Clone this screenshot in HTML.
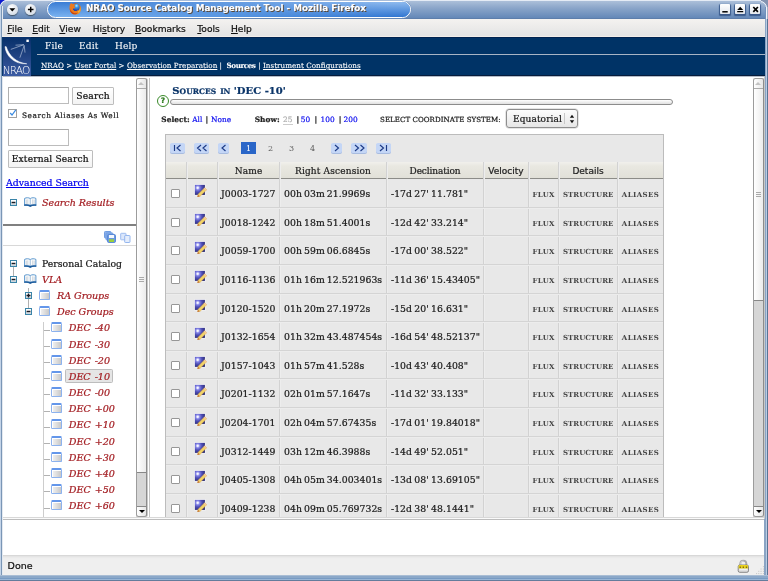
<!DOCTYPE html>
<html lang="en"><head><meta charset="utf-8"><title>NRAO Source Catalog Management Tool - Mozilla Firefox</title>
<style>
*{box-sizing:border-box;margin:0;padding:0}
html,body{width:768px;height:581px;overflow:hidden;background:#fff}
body{position:relative;-webkit-text-stroke:.22px;font-family:"DejaVu Serif","Liberation Serif",serif;font-size:9px;color:#1a1a1a;letter-spacing:.16px}
i{font-style:normal;display:block;position:absolute}
a{color:inherit}
.abs,#win div,#win span.c{position:absolute}
#win{position:absolute;left:0;top:0;width:768px;height:581px;overflow:hidden;background:#fff;will-change:transform}
/* window frame */
#titlebar{left:0;top:0;width:768px;height:19px;background:linear-gradient(#e4ebf5 0,#e4ebf5 1px,#a9bdd8 1.500px,#8aa5c9 45%,#6488b8 100%);border-bottom:1px solid #5d7eab}
#corner{left:0;top:0;width:6px;height:6px;overflow:hidden}
#corner:after{content:"";position:absolute;left:0;top:.3px;width:12px;height:12px;border:1px solid #eef2f9;border-radius:50%;box-shadow:0 0 0 8px #0a18d0}
#pill{left:47px;top:1px;width:364px;height:17px;border:1px solid #fff;border-radius:9px;background:linear-gradient(#3b7dd4,#7ab2f0);box-shadow:0 0 0 .5px #6d8fc0;overflow:hidden}
#pill:after{content:"";position:absolute;left:0;top:0;right:0;bottom:0;background:linear-gradient(#8ebaee,#3176d1);-webkit-mask-image:linear-gradient(90deg,transparent 5%,#000 95%);mask-image:linear-gradient(90deg,transparent 5%,#000 95%)}
#ttl{left:86px;top:3.200px;height:14px;line-height:14px;font:bold 8.800px "DejaVu Sans","Liberation Sans",sans-serif;color:#fff;text-shadow:1px 1px 0 #5a4632;-webkit-text-stroke:.1px;white-space:nowrap;letter-spacing:0}
.wb{border-radius:50%;width:10.600px;height:10.600px;background:radial-gradient(circle at 40% 35%,#fff,#d8dfe8 70%,#9aa);box-shadow:0 1px 1px #456}
.wq{width:10px;height:10px;background:linear-gradient(#fff,#e4e8ee);border-radius:1px;box-shadow:0 1px 1px 0.5px #3a5a8c}
#lb{left:0;top:6px;width:3px;height:575px;background:linear-gradient(90deg,#c4d4e8 0,#c4d4e8 1px,#7a96b6 1px,#7a96b6 2px,#e4e9f0 2px)}
#rb{left:764px;top:77px;width:4px;height:504px;background:linear-gradient(90deg,#c8c8c8 0,#c8c8c8 1px,#8aa4c4 1px,#8aa4c4 2px,#b8cce4 2px,#b8cce4 3px,#5a7494 3px)}
#rb3{left:765px;top:19px;width:3px;height:58px;background:linear-gradient(90deg,#8aa4c4 0,#8aa4c4 1px,#b8cce4 1px,#b8cce4 2px,#5a7494 2px)}
#rb2{left:764.500px;top:6.500px;width:3.500px;height:12.500px;background:linear-gradient(90deg,#7090bc 0,#7090bc 1.200px,#f0f4fa 1.400px,#f0f4fa 2.400px,#5a6f94 2.600px)}
#trc{left:761px;top:0;width:7px;height:7px;overflow:hidden}
#trc:after{content:"";position:absolute;right:1px;top:.5px;width:12px;height:12px;border:1px solid #f4f7fb;border-radius:50%;box-shadow:0 0 0 8px #8393b0}
#bb{left:0;top:575px;width:768px;height:6px;background:linear-gradient(#a9bdd4 0,#a9bdd4 1px,#8ba8c9 1px,#8ba8c9 3px,#789bc3 3px,#789bc3 4px,#9ab6d6 4px,#9ab6d6 5px,#647c9c 5px)}
#menubar{left:2px;top:19px;width:763px;height:18px;background:linear-gradient(#f4f2f0,#e5e5e5 90%);border-bottom:1px solid #f3eee9;font:9.1px "DejaVu Sans","Liberation Sans",sans-serif;color:#111;letter-spacing:0}
#menubar span{position:absolute;top:4px;line-height:12px;white-space:nowrap}
#menubar u{text-decoration:underline;text-underline-offset:1px}
/* navy header */
#hdr{left:2px;top:37px;width:763px;height:39px;background:linear-gradient(#001d48 0,#002a5a 1px,#003366 1.500px);border-bottom:1px solid #061c3c;box-shadow:0 1px 0 #b4bcc8}
#hdr .m{position:absolute;top:3px;color:#fff;font-size:9px;line-height:12px;-webkit-text-stroke:.08px}
#hline{left:35.300px;top:17px;width:727.700px;height:1px;background:#a8b4c4}
#crumb{left:39px;top:23px;height:12px;line-height:12px;font-size:7.2px;color:#fff;white-space:nowrap;letter-spacing:.02px;-webkit-text-stroke:.1px}
#crumb u{text-decoration:underline}
#crumb b{font-weight:bold;letter-spacing:-.45px;margin-left:2.200px;margin-right:.5px}
/* left panel */
#left{left:2px;top:78px;width:134px;height:439px;overflow:hidden;background:#fff}
.inp{position:absolute;width:61px;height:17px;background:#fff;border:1px solid #bcbcbc;border-top-color:#a8a8a8;border-left-color:#b0b0b0}
.btn{position:absolute;background:linear-gradient(#fff,#f3f3f3);border:1px solid #bdbdbd;border-radius:1px;font-size:9.2px;text-align:center;white-space:nowrap;color:#111}
#chk{left:6px;top:31px;width:9px;height:9px;border:1px solid #a0a0a0;background:#fff}
#chklbl{left:20px;top:33px;font-size:7.4px;line-height:10px;letter-spacing:.55px;white-space:nowrap;color:#222}
#adv{left:4px;top:97.500px;font-size:9.4px;line-height:13px;color:#0000ee;text-decoration:underline;white-space:nowrap;letter-spacing:0}
.pm{position:absolute;width:7px;height:7px}
.lbl{position:absolute;white-space:nowrap;font-size:9.3px;line-height:12px;letter-spacing:0;margin-top:1px}
.lbl.it,.tn .lbl{font-size:9.6px;letter-spacing:-.05px}
.it{font-style:italic;color:#a31d22}
#hr1{left:0;top:146.300px;width:134px;height:1.700px;background:#808080}
#hr2{left:0;top:167px;width:134px;height:1px;background:#d8d8d8}
.vl{width:1px;background:#b0b0b0}
.fold{width:11px;height:10px;border:1px solid #8cb2ee;border-top:2px solid #6396ea;border-radius:1px;background:linear-gradient(90deg,#f4f4f4,#c8c8c8);box-shadow:inset 1px 1px 0 #fff;border-radius:1.500px}
.tn{position:absolute;left:0;width:134px;height:16px}
.tn .tl{left:42px;top:10.400px;width:5.500px;height:1px;background:#b2b2b2}
.tn .fold{left:48.700px;top:3px}
.tn .lbl{left:66.800px;top:2px;font-style:italic;color:#a31d22;word-spacing:1px}
.tn .lbl.sel{left:63px;top:0;padding:2px 1.750px 0 2.750px;line-height:10px;border:1px solid #bdbdbd;background:#e5e5e5;border-radius:1.500px}
/* scrollbars */
.sb{position:absolute;width:11px;background:#d6d6d6;border:1px solid #9c9c9c;border-right-color:#8c8c8c;border-radius:2.500px;overflow:hidden;box-shadow:1px 0 0 #c8c8c8}
.sb .up,.sb .dn{position:absolute;left:0;width:9px;height:10px;background:linear-gradient(90deg,#fff,#e6e6e6);border-bottom:1px solid #aaa}
.sb .dn{border-bottom:0;border-top:1px solid #888;border-radius:0 0 2px 2px}
.sb .tb{position:absolute;left:0;width:9px;background:linear-gradient(90deg,#fff,#ececec);border-bottom:1px solid #888}
.sb .gr{position:absolute;left:2px;width:5px;height:5px;border-top:1px solid #aaa;border-bottom:1px solid #aaa}
.sb .gr:after{content:"";position:absolute;left:0;top:1px;width:5px;height:1px;background:#aaa}
.arr{position:absolute;left:2px;width:0;height:0;border:2.5px solid transparent}
/* main */
#h1{left:172.300px;top:84.500px;width:130px;height:14px;font-weight:bold;font-size:10px;line-height:12px;color:#0a3468;white-space:nowrap;letter-spacing:.03px}
#h1 span,#h1 small{position:absolute;left:0;top:0}
#h1 small{font-size:7.500px;top:1.2px;left:7.300px;letter-spacing:.02px}
#help{left:157px;top:95px;width:12px;height:12px;border:1.800px solid #3a8a2a;border-radius:50%;background:#fff;color:#2a7a1a;font:bold 7.500px/9px "DejaVu Sans","Liberation Sans",sans-serif;text-align:center;letter-spacing:0}
#bar{left:170px;top:99px;width:503px;height:6px;border:1px solid #8c8c8c;border-radius:3px;background:linear-gradient(#fff,#e0e0e0)}
.sm{position:absolute;top:114px;font-size:7.4px;line-height:11px;white-space:nowrap;letter-spacing:.05px;color:#222}
.sm b{font-weight:bold}
.sm a{color:#1414f0;text-decoration:none}
.sm em{font-style:normal;color:#b0b0b0;border-bottom:1px solid #ccc}
#csl{left:380px;top:114px;font-size:7.050px;line-height:11px;letter-spacing:.05px;white-space:nowrap;color:#222}
#sel{left:506px;top:109px;width:72px;height:19px;border:1px solid #8e8e8e;border-radius:3px;background:linear-gradient(#fcfcfc,#e6e6e6);box-shadow:0 0 0 .5px #ccc}
#sel span{position:absolute;left:6px;top:3px;font-size:9px;line-height:13px;letter-spacing:.1px}
#sel i.sp{left:57px;top:3px;width:1px;height:11px;background:#c8c8c8}
#tbl{left:165px;top:134px;width:499px;height:383px;background:#e8e8e8;border:1px solid #bcbcbc;border-bottom:0}
#thead{left:166px;top:162px;width:497px;height:17px;background:linear-gradient(#f1f0ec 0,#e9e8e1 25%,#e1e0d8 100%);border-bottom:1.500px solid #8c8c88}
.th{position:absolute;top:164.500px;height:12px;line-height:12px;text-align:center;font-size:9px;white-space:nowrap;color:#222}
.th.ss{font-family:"DejaVu Sans","Liberation Sans",sans-serif;letter-spacing:0}
.cv{position:absolute;top:162px;width:2px;height:355px;background:linear-gradient(90deg,#d2d2d2 50%,#ededed 50%)}
.pg{position:absolute;top:143px;height:10px;background:#c4d6f6;border-radius:2px;box-shadow:0 1px 0 #a8bce0}
.pn{position:absolute;top:142px;height:12px;line-height:13.400px;font-size:8px;color:#5c5c5c;text-align:center;width:15px;-webkit-text-stroke:0;letter-spacing:0}
.pn.cur{background:#2a66c8;color:#fff}
.row{position:absolute;left:166px;width:497px;border-bottom:1px solid #d4d4d4;box-shadow:0 1px 0 #ececec}
.row .cb{left:5px;top:10px;width:9px;height:9px;background:#fff;border:1px solid #979797;border-radius:1px}
.row .ed{left:28px;top:5px;width:13px;height:13px}
.row .c{top:9px;line-height:12px;white-space:nowrap;font-size:9.3px;letter-spacing:.03px}
.row .nm{left:55px}
.row .ra{left:118px;word-spacing:-.9px}
.row .de{left:225px;word-spacing:-.7px}
.row .lk{font-weight:bold;font-size:7px;color:#454545;letter-spacing:.02px;top:10px;-webkit-text-stroke:0}
.row .fx{left:366.600px;letter-spacing:.3px}
.row .st{left:397px}
.row .al{left:455.800px;letter-spacing:.42px}
/* bottom */
#hsep{left:2px;top:517px;width:763px;height:3px;background:linear-gradient(#d8d8d8 33%,#fafafa 33%,#fafafa 66%,#bdbdbd 66%)}
#lower{left:2px;top:520px;width:763px;height:35px;background:#fff}
#status{left:3px;top:555px;width:761px;height:20px;background:linear-gradient(#d2d2d2 0,#e4e4e4 1.500px,#ededed 3px,#efefef 4px);font:9.500px/12px "DejaVu Sans","Liberation Sans",sans-serif;color:#111;letter-spacing:0}
#status span{position:absolute;left:4.600px;top:5px}

</style></head>
<body>
<div id="win">
<svg width="0" height="0" style="position:absolute"><defs><linearGradient id="pg" x1="0" y1="0" x2="0" y2="1"><stop offset=".2" stop-color="#fff"/><stop offset="1" stop-color="#c0ced8"/></linearGradient><symbol id="pmm" viewBox="0 0 7 7"><rect x=".5" y=".5" width="6" height="6" fill="url(#pg)" stroke="#3a84a8"/><rect x="1.600" y="2.800" width="3.800" height="1.400" fill="#1a1a22"/></symbol><symbol id="pmp" viewBox="0 0 7 7"><rect x=".5" y=".5" width="6" height="6" fill="url(#pg)" stroke="#3a84a8"/><rect x="1.500" y="2.800" width="4" height="1.400" fill="#1a1a22"/><rect x="2.800" y="1.500" width="1.400" height="4" fill="#1a1a22"/></symbol><symbol id="book" viewBox="0 0 13 10"><path d="M.6 8.200V1.400C2.400.5 4.400.5 6.250 1.500 8.100.5 10.100.5 11.900 1.400V8.200z" fill="#fdfdfd" stroke="#4a8cc8" stroke-width=".9"/><path d="M.2 7.600c2-.6 4.100-.5 6.050.5 1.950-1 4.050-1.100 6.050-.5V9c-2-.4-4.100-.2-6.050.9C4.300 8.800 2.200 8.600.2 9z" fill="#1d5c9c"/><path d="M6.250 1.800v6.200" stroke="#8ab0d4" stroke-width=".8"/><path d="M2.300 2.600v4.400M3.800 2.400v4.600M8.700 2.400v4.600M10.200 2.600v4.400" stroke="#b8c4d0" stroke-width=".7"/></symbol><symbol id="edit" viewBox="0 0 13 13"><defs><radialGradient id="eg" cx="3.700" cy="3.800" r="8.500" gradientUnits="userSpaceOnUse"><stop offset="0" stop-color="#fff"/><stop offset=".08" stop-color="#f0f0ff"/><stop offset=".24" stop-color="#8484e6"/><stop offset=".5" stop-color="#4e4eb4"/><stop offset="1" stop-color="#26266e"/></radialGradient></defs><rect x=".3" y=".3" width="11.400" height="11.400" fill="#f1f1f6"/><rect x=".9" y=".9" width="10" height="10" fill="url(#eg)"/><path d="M3.900 10.500L10.700 3.700l2 2L5.900 12.500z" fill="#f2d468" stroke="#dfa84a" stroke-width=".5"/><path d="M9.700 4.700l1-1 2 2-1 1z" fill="#f4c8a0"/><path d="M3.900 10.500l-.7 2.700 2.700-.7z" fill="#c87828"/></symbol></defs></svg>
<div id="titlebar"></div>
<div id="corner"></div><div id="trc"></div>
<div id="pill"></div>
<i class="wb" style="left:7px;top:4px"></i>
<i class="wb" style="left:25.300px;top:4px"></i>
<svg class="abs" style="position:absolute;left:8px;top:5px" width="30" height="10" viewBox="0 0 30 10"><path d="M1.300 3.200h6L4.300 6.400z" fill="#000"/><path d="M19.900 4.500h5.600M22.700 1.700v5.600" stroke="#000" stroke-width="1.500" fill="none"/></svg>
<svg style="position:absolute;left:68.500px;top:2px" width="13" height="13" viewBox="0 0 13 13"><defs><radialGradient id="fg" cx="7.500" cy="3.800" r="5" gradientUnits="userSpaceOnUse"><stop offset="0" stop-color="#b8ecff"/><stop offset=".35" stop-color="#3a9ae8"/><stop offset="1" stop-color="#1c3ca8"/></radialGradient><radialGradient id="fo" cx="8.500" cy="8" r="8" gradientUnits="userSpaceOnUse"><stop offset="0" stop-color="#ffd84a"/><stop offset=".45" stop-color="#f08a1c"/><stop offset="1" stop-color="#c8420e"/></radialGradient></defs><circle cx="6.400" cy="6.900" r="5.700" fill="url(#fo)"/><circle cx="7" cy="5.400" r="3.700" fill="url(#fg)"/><path d="M.9 2.600L2.300.9l1.200 1.300c1.100-.3 2.100.1 2.700.9L5.100 4.300c.8.500 1.200 1.200 1 2l-1.900.3c-.5 1 .2 2.100 1.400 2.500 1.500.4 2.900-.3 3.500-1.600.3 1.600-.6 3.300-2.300 3.900-2.400.8-4.900-.5-5.700-2.900C.4 6.300.4 4.300.9 2.600z" fill="#ec7a1c"/><path d="M1.100 6.500c.3 2.300 2 4.300 4.400 4.700 1.500.2 2.800-.3 3.700-1.300-.8 1.700-2.600 2.600-4.500 2.300C2.300 11.800.7 9.400 1.100 6.500z" fill="#c8420e"/></svg>
<div id="ttl">NRAO Source Catalog Management Tool - Mozilla Firefox</div>
<i class="wq" style="left:719.500px;top:4px"></i>
<i class="wq" style="left:734.500px;top:4px"></i>
<i class="wq" style="left:750px;top:4px"></i>
<svg style="position:absolute;left:719.500px;top:4px" width="41" height="10" viewBox="0 0 41 10"><path d="M2.300 7.800h5.400" stroke="#000" stroke-width="1.500"/><path d="M20.200 2.800l3 3.200h-6zM17.200 7h6v1.300h-6z" fill="#000"/><path d="M33.300 3l4.600 4.800M37.900 3l-4.600 4.800" stroke="#000" stroke-width="1.700"/></svg>

<div id="menubar">
<span style="left:5.300px"><u>F</u>ile</span>
<span style="left:30.300px"><u>E</u>dit</span>
<span style="left:57.300px"><u>V</u>iew</span>
<span style="left:90.700px">Hi<u>s</u>tory</span>
<span style="left:133px"><u>B</u>ookmarks</span>
<span style="left:195.300px"><u>T</u>ools</span>
<span style="left:229px"><u>H</u>elp</span>
</div>
<div id="hdr">
<svg style="position:absolute;left:0;top:0" width="29" height="39" viewBox="0 0 29 39"><defs><linearGradient id="lg" x1="0" y1="0" x2="0" y2="1"><stop offset="0" stop-color="#06306a"/><stop offset=".45" stop-color="#1f4180"/><stop offset="1" stop-color="#3c5ca4"/></linearGradient></defs><rect width="29" height="39" fill="url(#lg)"/><path d="M3 9.600C3.600 18.500 12 27.600 24.800 26.800 14.500 25.800 6.800 18.500 4.300 9.800z" fill="#fff" stroke="#fff" stroke-width=".5" stroke-linejoin="round"/><path d="M8.800 12.400L21.900 7.700 13.500 8.200M17.900 20.700L22.200 8.400 23 15.600" stroke="#c8d4e8" stroke-width=".6" fill="none"/><rect x="24.400" y="2.600" width="2.400" height="2.400" fill="#fff"/><text transform="translate(.8 37.300) scale(1.100 1)" font-family="DejaVu Sans, Liberation Sans, sans-serif" font-weight="200" font-size="9.600" fill="#fff" letter-spacing="-.8" style="-webkit-text-stroke:0">NRAO</text></svg>
<span class="m" style="left:43px">File</span>
<span class="m" style="left:77px">Edit</span>
<span class="m" style="left:113px">Help</span>
<div id="hline"></div>
<div id="crumb"><u>NRAO</u> &gt; <u>User Portal</u> &gt; <u>Observation Preparation</u> | <b>Sources</b> | <u>Instrument Configurations</u></div>
</div>
<div id="left">
<div class="inp" style="left:5.500px;top:9px;width:61.500px"></div>
<div class="btn" style="left:70px;top:8.500px;width:42px;height:18.500px;line-height:16.500px">Search</div>
<div id="chk"><svg style="position:absolute;left:0;top:-1px" width="8" height="8" viewBox="0 0 8 8"><path d="M1.200 4l1.800 2 3.800-5.200" stroke="#3a8ae0" stroke-width="1.200" fill="none"/></svg></div>
<div id="chklbl">Search Aliases As Well</div>
<div class="inp" style="left:5.500px;top:51px;width:61.500px;height:16.500px"></div>
<div class="btn" style="left:5.500px;top:71.500px;width:85.500px;height:18px;line-height:16px;font-size:9.100px">External Search</div>
<div id="adv">Advanced Search</div>
<svg class="pm" style="left:8px;top:121px" viewBox="0 0 7 7"><use href="#pmm"/></svg>
<svg class="bk" style="position:absolute;left:22px;top:119px" width="13" height="10" viewBox="0 0 13 10"><use href="#book"/></svg>
<span class="lbl it" style="left:40px;top:118px">Search Results</span>
<div id="hr1"></div>
<svg style="position:absolute;left:102px;top:153px" width="27" height="12" viewBox="0 0 27 12"><rect x=".5" y=".5" width="6.500" height="6.500" rx=".8" fill="#8fb2ea" stroke="#6f9de2"/><rect x="2" y="2" width="7" height="7" rx=".8" fill="#86ace8" stroke="#6f9de2"/><rect x="3.500" y="3.500" width="8" height="8" rx="1.200" fill="#6c9ae0" stroke="#5a8ad8"/><rect x="5" y="4" width="5" height="3" fill="#f4f8fe"/><rect x="5" y="8.300" width="5" height="2.700" fill="#9cd03c"/><rect x="16.700" y="2.300" width="5.300" height="6.500" rx=".6" fill="#dbe7fb" stroke="#9dbcf0"/><rect x="20.700" y="4.500" width="5.300" height="7" rx=".6" fill="#e4edfc" stroke="#94b6ee"/></svg>
<div id="hr2"></div>
<i class="vl" style="left:11px;top:189px;height:9px"></i>
<svg class="pm" style="left:8px;top:182px" viewBox="0 0 7 7"><use href="#pmm"/></svg>
<svg style="position:absolute;left:22px;top:180px" width="13" height="10" viewBox="0 0 13 10"><use href="#book"/></svg>
<span class="lbl" style="left:40px;top:179px">Personal Catalog</span>
<svg class="pm" style="left:8px;top:198px" viewBox="0 0 7 7"><use href="#pmm"/></svg>
<svg style="position:absolute;left:22px;top:196px" width="13" height="10" viewBox="0 0 13 10"><use href="#book"/></svg>
<span class="lbl it" style="left:40px;top:195px">VLA</span>
<i class="vl" style="left:26px;top:210px;height:21px"></i>
<svg class="pm" style="left:23px;top:214px" viewBox="0 0 7 7"><use href="#pmp"/></svg>
<i class="fold" style="left:37px;top:212px"></i>
<span class="lbl it" style="left:55px;top:211px">RA Groups</span>
<svg class="pm" style="left:23px;top:230px" viewBox="0 0 7 7"><use href="#pmm"/></svg>
<i class="fold" style="left:37px;top:228px"></i>
<span class="lbl it" style="left:55px;top:227px">Dec Groups</span>
<i class="vl" style="left:40.500px;top:244px;height:198px;width:1.300px;background:#cdcdcd"></i>
<div id="decs"><div class="tn" style="top:241.3px"><i class="tl"></i><i class="fold"></i><span class="lbl">DEC -40</span></div>
<div class="tn" style="top:257.5px"><i class="tl"></i><i class="fold"></i><span class="lbl">DEC -30</span></div>
<div class="tn" style="top:273.7px"><i class="tl"></i><i class="fold"></i><span class="lbl">DEC -20</span></div>
<div class="tn" style="top:289.8px"><i class="tl"></i><i class="fold"></i><span class="lbl sel">DEC -10</span></div>
<div class="tn" style="top:306.0px"><i class="tl"></i><i class="fold"></i><span class="lbl">DEC -00</span></div>
<div class="tn" style="top:322.2px"><i class="tl"></i><i class="fold"></i><span class="lbl">DEC +00</span></div>
<div class="tn" style="top:338.4px"><i class="tl"></i><i class="fold"></i><span class="lbl">DEC +10</span></div>
<div class="tn" style="top:354.6px"><i class="tl"></i><i class="fold"></i><span class="lbl">DEC +20</span></div>
<div class="tn" style="top:370.7px"><i class="tl"></i><i class="fold"></i><span class="lbl">DEC +30</span></div>
<div class="tn" style="top:386.9px"><i class="tl"></i><i class="fold"></i><span class="lbl">DEC +40</span></div>
<div class="tn" style="top:403.1px"><i class="tl"></i><i class="fold"></i><span class="lbl">DEC +50</span></div>
<div class="tn" style="top:419.3px"><i class="tl"></i><i class="fold"></i><span class="lbl">DEC +60</span></div>
<div class="tn" style="top:435.5px"><i class="tl"></i><i class="fold"></i><span class="lbl">DEC +70</span></div></div>
</div><!-- /left -->
<div class="sb" style="left:136px;top:78px;height:439px"><div class="up"><i class="arr" style="top:3px;left:1px;border-width:0 3.500px 3px 3.500px;border-bottom-color:#c2c2c2"></i></div><div class="tb" style="top:10px;height:384px"><i class="gr" style="top:188px"></i></div><div class="dn" style="top:427px"><i class="arr" style="top:3px;left:1.500px;border-width:3.500px 3px 0 3px;border-top-color:#000"></i></div></div>
<i style="left:149px;top:78px;width:1px;height:439px;background:#c4c4c4"></i>
<div id="h1"><span>S</span><small>OURCES</small><small style="left:48px;letter-spacing:-.4px">IN</small><span style="left:61.400px">'DEC -10'</span></div>
<div id="help">?</div>
<div id="bar"></div>
<div class="sm" style="left:161.300px"><b>Select:</b></div><div class="sm" style="left:192.200px"><a>All</a></div><div class="sm" style="left:205.600px"><b>|</b></div><div class="sm" style="left:210.900px"><a>None</a></div>
<div class="sm" style="left:254.700px"><b>Show:</b></div><div class="sm" style="left:283px"><em>25</em></div><div class="sm" style="left:296.400px"><b>|</b></div><div class="sm" style="left:300.800px"><a>50</a></div><div class="sm" style="left:314.500px"><b>|</b></div><div class="sm" style="left:320.600px"><a>100</a></div><div class="sm" style="left:338.800px"><b>|</b></div><div class="sm" style="left:343.500px"><a>200</a></div>
<div id="csl">SELECT COORDINATE SYSTEM:</div>
<div id="sel"><span>Equatorial</span><i class="sp"></i><svg style="position:absolute;left:62px;top:4px" width="6" height="10" viewBox="0 0 6 10"><path d="M3 .8l2.200 3H.8zM3 9.200L.8 6.200h4.400z" fill="#111"/></svg></div>
<div id="tbl"></div>
<i class="pg" style="left:170px;width:15px"></i><i class="pg" style="left:194px;width:15px"></i><i class="pg" style="left:218px;width:11px"></i>
<i class="pg" style="left:331px;width:11px"></i><i class="pg" style="left:351px;width:16px"></i><i class="pg" style="left:376px;width:15px"></i>
<svg style="position:absolute;left:170px;top:143px" width="222" height="10" viewBox="0 0 222 10"><g stroke="#1c3a86" stroke-width="1.150" fill="none"><path d="M4.500 2v6M10.500 2L7 5l3.500 3"/><path d="M31 2l-3.500 3L31 8M36.500 2L33 5l3.500 3"/><path d="M55.500 2L52 5l3.500 3"/><path d="M165 2l3.500 3L165 8"/><path d="M185 2l3.500 3L185 8M190.500 2L194 5l-3.500 3"/><path d="M210 2l3.500 3L210 8M216.500 2v6"/></g></svg>
<span class="pn cur" style="left:241px">1</span><span class="pn" style="left:263px">2</span><span class="pn" style="left:284px">3</span><span class="pn" style="left:305px">4</span>
<div id="thead"></div>
<span class="th" style="left:218px;width:61px">Name</span>
<span class="th" style="left:280px;width:106px">Right Ascension</span>
<span class="th" style="left:387px;width:96px;letter-spacing:-.12px">Declination</span>
<span class="th ss" style="left:484px;width:44px">Velocity</span>
<span class="th ss" style="left:559px;width:58px">Details</span>
<i class="cv" style="left:186px"></i><i class="cv" style="left:217px"></i><i class="cv" style="left:279px"></i><i class="cv" style="left:386px"></i><i class="cv" style="left:483px"></i><i class="cv" style="left:528px"></i><i class="cv" style="left:558px"></i><i class="cv" style="left:617px"></i>
<div class="row" style="top:179px;height:29px"><i class="cb"></i><svg class="ed" style="position:absolute" viewBox="0 0 13 13"><use href="#edit"/></svg><span class="c nm">J0003-1727</span><span class="c ra">00h 03m 21.9969s</span><span class="c de">-17d 27' 11.781"</span><span class="c lk fx">FLUX</span><span class="c lk st">STRUCTURE</span><span class="c lk al">ALIASES</span></div>
<div class="row" style="top:208px;height:28px"><i class="cb"></i><svg class="ed" style="position:absolute" viewBox="0 0 13 13"><use href="#edit"/></svg><span class="c nm">J0018-1242</span><span class="c ra">00h 18m 51.4001s</span><span class="c de">-12d 42' 33.214"</span><span class="c lk fx">FLUX</span><span class="c lk st">STRUCTURE</span><span class="c lk al">ALIASES</span></div>
<div class="row" style="top:236px;height:29px"><i class="cb"></i><svg class="ed" style="position:absolute" viewBox="0 0 13 13"><use href="#edit"/></svg><span class="c nm">J0059-1700</span><span class="c ra">00h 59m 06.6845s</span><span class="c de">-17d 00' 38.522"</span><span class="c lk fx">FLUX</span><span class="c lk st">STRUCTURE</span><span class="c lk al">ALIASES</span></div>
<div class="row" style="top:265px;height:29px"><i class="cb"></i><svg class="ed" style="position:absolute" viewBox="0 0 13 13"><use href="#edit"/></svg><span class="c nm">J0116-1136</span><span class="c ra">01h 16m 12.521963s</span><span class="c de">-11d 36' 15.43405"</span><span class="c lk fx">FLUX</span><span class="c lk st">STRUCTURE</span><span class="c lk al">ALIASES</span></div>
<div class="row" style="top:294px;height:28px"><i class="cb"></i><svg class="ed" style="position:absolute" viewBox="0 0 13 13"><use href="#edit"/></svg><span class="c nm">J0120-1520</span><span class="c ra">01h 20m 27.1972s</span><span class="c de">-15d 20' 16.631"</span><span class="c lk fx">FLUX</span><span class="c lk st">STRUCTURE</span><span class="c lk al">ALIASES</span></div>
<div class="row" style="top:322px;height:29px"><i class="cb"></i><svg class="ed" style="position:absolute" viewBox="0 0 13 13"><use href="#edit"/></svg><span class="c nm">J0132-1654</span><span class="c ra">01h 32m 43.487454s</span><span class="c de">-16d 54' 48.52137"</span><span class="c lk fx">FLUX</span><span class="c lk st">STRUCTURE</span><span class="c lk al">ALIASES</span></div>
<div class="row" style="top:351px;height:28px"><i class="cb"></i><svg class="ed" style="position:absolute" viewBox="0 0 13 13"><use href="#edit"/></svg><span class="c nm">J0157-1043</span><span class="c ra">01h 57m 41.528s</span><span class="c de">-10d 43' 40.408"</span><span class="c lk fx">FLUX</span><span class="c lk st">STRUCTURE</span><span class="c lk al">ALIASES</span></div>
<div class="row" style="top:379px;height:29px"><i class="cb"></i><svg class="ed" style="position:absolute" viewBox="0 0 13 13"><use href="#edit"/></svg><span class="c nm">J0201-1132</span><span class="c ra">02h 01m 57.1647s</span><span class="c de">-11d 32' 33.133"</span><span class="c lk fx">FLUX</span><span class="c lk st">STRUCTURE</span><span class="c lk al">ALIASES</span></div>
<div class="row" style="top:408px;height:29px"><i class="cb"></i><svg class="ed" style="position:absolute" viewBox="0 0 13 13"><use href="#edit"/></svg><span class="c nm">J0204-1701</span><span class="c ra">02h 04m 57.67435s</span><span class="c de">-17d 01' 19.84018"</span><span class="c lk fx">FLUX</span><span class="c lk st">STRUCTURE</span><span class="c lk al">ALIASES</span></div>
<div class="row" style="top:437px;height:28px"><i class="cb"></i><svg class="ed" style="position:absolute" viewBox="0 0 13 13"><use href="#edit"/></svg><span class="c nm">J0312-1449</span><span class="c ra">03h 12m 46.3988s</span><span class="c de">-14d 49' 52.051"</span><span class="c lk fx">FLUX</span><span class="c lk st">STRUCTURE</span><span class="c lk al">ALIASES</span></div>
<div class="row" style="top:465px;height:29px"><i class="cb"></i><svg class="ed" style="position:absolute" viewBox="0 0 13 13"><use href="#edit"/></svg><span class="c nm">J0405-1308</span><span class="c ra">04h 05m 34.003401s</span><span class="c de">-13d 08' 13.69105"</span><span class="c lk fx">FLUX</span><span class="c lk st">STRUCTURE</span><span class="c lk al">ALIASES</span></div>
<div class="row" style="top:494px;height:29px"><i class="cb"></i><svg class="ed" style="position:absolute" viewBox="0 0 13 13"><use href="#edit"/></svg><span class="c nm">J0409-1238</span><span class="c ra">04h 09m 05.769732s</span><span class="c de">-12d 38' 48.1441"</span><span class="c lk fx">FLUX</span><span class="c lk st">STRUCTURE</span><span class="c lk al">ALIASES</span></div>
<div class="sb" style="left:753px;top:78px;height:439px"><div class="up"><i class="arr" style="top:3px;left:1px;border-width:0 3.500px 3px 3.500px;border-bottom-color:#c2c2c2"></i></div><div class="tb" style="top:10px;height:212px"><i class="gr" style="top:102.500px"></i></div><div class="dn" style="top:427px"><i class="arr" style="top:3px;left:1.500px;border-width:3.500px 3px 0 3px;border-top-color:#000"></i></div></div>
<div id="hsep"></div>
<div id="lower"></div>
<div id="status"><span>Done</span>
<svg style="position:absolute;left:734px;top:3.500px" width="13" height="14" viewBox="0 0 13 14"><path d="M3.300 7V4.600a3 3 0 0 1 6 0V7" stroke="#a9a9a9" stroke-width="1.900" fill="none"/><path d="M3.600 6.500V4.700a2.700 2.700 0 0 1 2.700-2.700" stroke="#e6e6e6" stroke-width=".7" fill="none"/><rect x="1.200" y="6" width="10.300" height="7.300" rx="1.600" fill="#dedede" stroke="#6e6e6e" stroke-width=".8"/><path d="M1.600 6.800a1.200 1.200 0 0 1 1.200-.8h7.100a1.200 1.200 0 0 1 1.200.8V9.600H1.600z" fill="#ead21e"/><path d="M2.600 7.600h1.300v1.400H2.600zM5.700 7.600h1.300v1.400H5.700zM8.800 7.600h1.300v1.400H8.800z" fill="#5c4c08" opacity=".75"/><path d="M2.400 10.600h8" stroke="#f6f6f6" stroke-width=".8"/></svg>
<svg style="position:absolute;left:752px;top:10px" width="10" height="10" viewBox="0 0 10 10"><g fill="#cbcbcb"><rect x="7.900" y="1.100" width="1.100" height="1.100"/><rect x="5.500" y="3.500" width="1.100" height="1.100"/><rect x="7.900" y="3.500" width="1.100" height="1.100"/><rect x="3.200" y="5.800" width="1.100" height="1.100"/><rect x="5.500" y="5.800" width="1.100" height="1.100"/><rect x="7.900" y="5.800" width="1.100" height="1.100"/><rect x="1" y="8" width="1.100" height="1.100"/><rect x="3.200" y="8" width="1.100" height="1.100"/><rect x="5.500" y="8" width="1.100" height="1.100"/><rect x="7.900" y="8" width="1.100" height="1.100"/></g></svg>
</div>
<div id="lb"></div><i style="left:2px;top:37px;width:1px;height:39px;background:#0a3a6c"></i><i style="left:2px;top:19px;width:1px;height:18px;background:#e9ebee"></i><div id="rb"></div><div id="rb3"></div><i style="left:764px;top:519px;width:1px;height:56px;background:#8aa4c4"></i><div id="rb2"></div><div id="bb"></div>
</div><!-- /win -->

</body></html>
